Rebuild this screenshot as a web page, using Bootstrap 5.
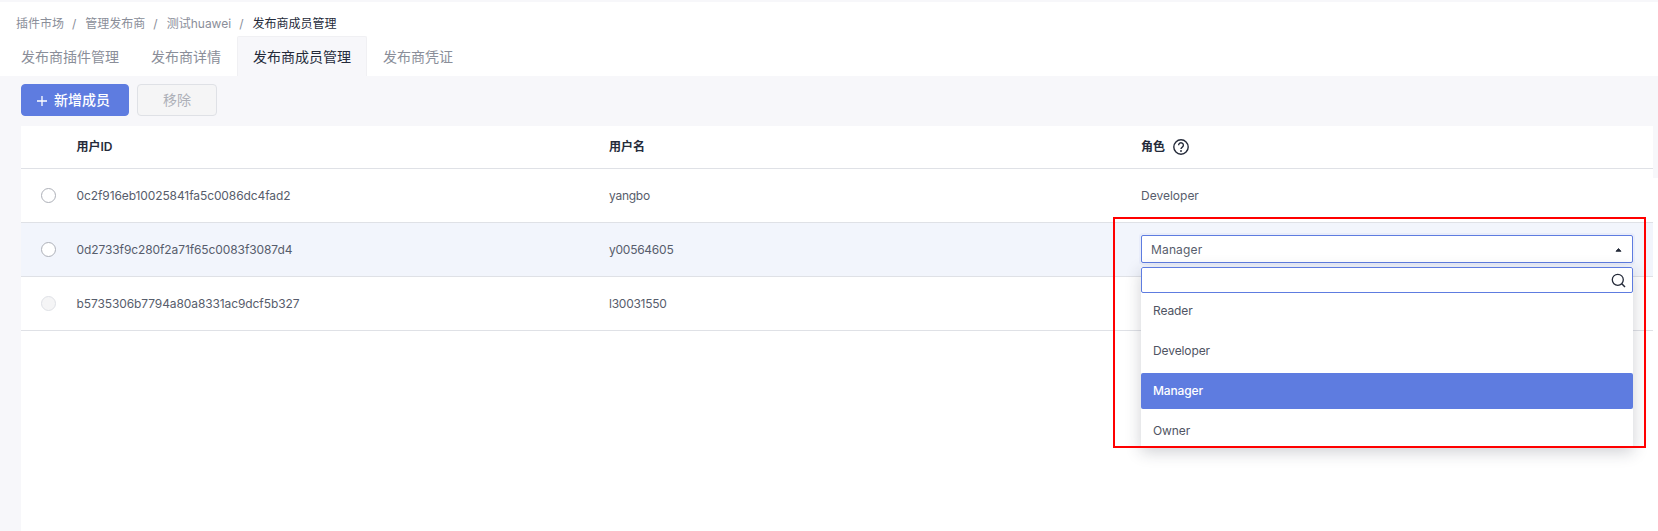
<!DOCTYPE html>
<html lang="zh-CN">
<head>
<meta charset="utf-8">
<title>发布商成员管理</title>
<link href="https://cdn.jsdelivr.net/npm/bootstrap@5.3.0/dist/css/bootstrap.min.css" rel="stylesheet">
<style>
html,body{height:100%;overflow:hidden;}
body{font-family:Inter,"Noto Sans CJK SC",sans-serif;font-size:12px;color:#575d6c;background:#fff;}
.page-shell{position:relative;height:531px;}
.top-area{height:76px;border-top:2px solid #f7f7fa;background:#fff;}
.crumbs{margin:0;padding:15px 0 0 16px;font-size:12px;line-height:14px;height:34px;}
.crumbs .breadcrumb-item,.crumbs .breadcrumb-item a{color:#8a8e99;text-decoration:none;}
.crumbs .breadcrumb-item+.breadcrumb-item{padding-left:8px;}
.crumbs .breadcrumb-item+.breadcrumb-item::before{color:#8a8e99;padding-right:9px;}
.crumbs .breadcrumb-item.active{color:#252b3a;}
.tab-row{padding-left:5px;height:40px;flex-wrap:nowrap;}
.tab-row .nav-link{color:#8a8e99;font-size:14px;line-height:40px;padding:0 15px;height:40px;border:1px solid transparent;border-bottom:0;border-radius:2px 2px 0 0;margin:0;}
.tab-row .nav-link.active{color:#252b3a;background:#f7f7fa;border-color:#f0f0f3;}
.tool-bar{height:50px;background:#f7f7fa;padding:8px 0 0 21px;}
.tool-bar .btn{height:32px;font-size:14px;line-height:20px;padding:0;border-radius:4px;}
.tool-bar .add-btn{width:108px;background:#5e7ce0;border-color:#5e7ce0;color:#fff;font-weight:500;padding-right:3px;}
.add-btn svg{margin-right:7px;vertical-align:-1px;}
.remove-btn.btn:disabled{width:80px;background:#f5f5f6;border-color:#dfe1e6;color:#adb0b8;opacity:1;}
.body-area{height:405px;}
.side-strip{width:21px;background:#f7f7fa;flex:none;}
.end-strip{width:5px;height:52px;background:#f7f7fa;flex:none;}
.table-area{width:1632px;flex:none;}
.member-table{table-layout:fixed;width:1632px;margin:0;font-size:12px;--bs-table-color:#575d6c;--bs-table-border-color:#dfe1e6;}
.member-table th,.member-table td{vertical-align:middle;border-bottom:1px solid #dfe1e6;box-shadow:none;}
.member-table thead th{height:42px;color:#252b3a;font-weight:600;}
.member-table thead tr{height:42px;}
.member-table tbody td{height:54px;color:#575d6c;}
.member-table>thead>tr>th{padding:0 12px;}
.member-table>tbody>tr>td{padding:2px 12px 0;}
.member-table>thead>tr>th.pick-col,.member-table>tbody>tr>td.pick-col{padding:0 0 0 20px;}
.member-table>thead>tr>th.role-col{padding:0 20px 0 12px;}
.member-table>tbody>tr>td.role-col{padding:2px 20px 0 12px;}
.member-table>tbody>tr>td.select-cell{padding:0 20px 0 12px;}
.member-table tbody tr.row-hl>td{background:#f2f5fc;}
.member-table .id-cell{letter-spacing:-.1px;}
.member-table .name-cell{letter-spacing:-.25px;}
.pick-radio.form-check-input{width:15px;height:15px;margin:0;border:1px solid #adb0b8;background-color:#fff;display:block;}
.pick-radio.form-check-input:disabled{opacity:1;background-color:#f5f5f6;border-color:#dfe1e6;}
.help-icon{margin-left:8px;vertical-align:-4px;}
.role-select{position:relative;}
.select-box{height:28px;border:1px solid #5e7ce0;border-radius:2px;background:#fff;padding:2px 9px 0;box-shadow:0 0 0 2px #e9edfa;color:#575d6c;letter-spacing:.15px;}
.select-panel{position:absolute;left:0;right:0;top:32px;height:181px;background:#fff;box-shadow:0 4px 16px rgba(37,43,58,.22);z-index:5;overflow:hidden;border-radius:2px;}
.search-box{height:26px;border:1px solid #5e7ce0;border-radius:2px;padding-right:6px;}
.option-list{margin:0;padding:0;}
.option-list .list-group-item{border:0;padding:0 0 0 12px;height:36px;line-height:36px;margin-top:4px;font-size:12px;color:#4f5463;border-radius:0;background:transparent;letter-spacing:-.1px;}
.option-list .list-group-item:first-child{margin-top:0;}
.option-list .list-group-item+.list-group-item.active{margin-top:4px;border-top-width:0;}
.option-list .list-group-item.active{background:#5e7ce0;color:#fff;font-weight:500;border-radius:2px;letter-spacing:-.15px;}
.mark-box{position:absolute;left:1113px;top:217px;width:533px;height:231px;border:2px solid #f00;z-index:10;pointer-events:none;}
</style>
</head>
<body>
<div class="page-shell">
  <div class="top-area">
    <nav aria-label="breadcrumb">
      <ol class="breadcrumb crumbs">
        <li class="breadcrumb-item"><a href="#">插件市场</a></li>
        <li class="breadcrumb-item"><a href="#">管理发布商</a></li>
        <li class="breadcrumb-item"><a href="#">测试huawei</a></li>
        <li class="breadcrumb-item active" aria-current="page">发布商成员管理</li>
      </ol>
    </nav>
    <ul class="nav tab-row">
      <li class="nav-item"><a class="nav-link" href="#">发布商插件管理</a></li>
      <li class="nav-item"><a class="nav-link" href="#">发布商详情</a></li>
      <li class="nav-item"><a class="nav-link active" href="#">发布商成员管理</a></li>
      <li class="nav-item"><a class="nav-link" href="#">发布商凭证</a></li>
    </ul>
  </div>
  <div class="tool-bar d-flex gap-2">
    <button type="button" class="btn add-btn"><svg width="10" height="10" viewBox="0 0 10 10"><path d="M5 0v10M0 5h10" stroke="#fff" stroke-width="1.3" fill="none"/></svg>新增成员</button>
    <button type="button" class="btn remove-btn" disabled>移除</button>
  </div>
  <div class="body-area d-flex align-items-stretch">
    <div class="side-strip"></div>
    <div class="table-area">
      <table class="table member-table">
        <colgroup><col style="width:43.5px"><col style="width:532.5px"><col style="width:532px"><col style="width:524px"></colgroup>
        <thead>
          <tr><th class="pick-col"></th><th>用户ID</th><th>用户名</th><th class="role-col">角色<svg class="help-icon" width="16" height="16" viewBox="0 0 16 16"><circle cx="8" cy="8" r="7.2" fill="none" stroke="#252b3a" stroke-width="1.4"/><path d="M5.6 6.2a2.4 2.4 0 1 1 3.7 2c-.9.6-1.3 1-1.3 1.9" fill="none" stroke="#252b3a" stroke-width="1.4"/><circle cx="8" cy="12" r=".95" fill="#252b3a"/></svg></th></tr>
        </thead>
        <tbody>
          <tr><td class="pick-col"><input class="form-check-input pick-radio" type="radio" name="member" aria-label="选择"></td><td class="id-cell">0c2f916eb10025841fa5c0086dc4fad2</td><td class="name-cell">yangbo</td><td class="role-col">Developer</td></tr>
          <tr class="row-hl"><td class="pick-col"><input class="form-check-input pick-radio" type="radio" name="member" aria-label="选择"></td><td class="id-cell">0d2733f9c280f2a71f65c0083f3087d4</td><td class="name-cell">y00564605</td>
            <td class="select-cell">
              <div class="role-select">
                <div class="select-box d-flex align-items-center justify-content-between">
                  <span>Manager</span>
                  <svg width="9" height="6" viewBox="0 0 9 6"><path d="M4.5 1.5L7 4.3H2Z" fill="#252b3a" stroke="#252b3a" stroke-width=".9" stroke-linejoin="round"/></svg>
                </div>
                <div class="select-panel">
                  <div class="search-box d-flex align-items-center justify-content-end">
                    <svg width="15" height="15" viewBox="0 0 15 15"><circle cx="6.8" cy="6.8" r="5.5" fill="none" stroke="#252b3a" stroke-width="1.3"/><path d="M10.8 10.8l3.2 3.2" stroke="#252b3a" stroke-width="1.5" fill="none"/></svg>
                  </div>
                  <ul class="list-group option-list">
                    <li class="list-group-item">Reader</li>
                    <li class="list-group-item">Developer</li>
                    <li class="list-group-item active">Manager</li>
                    <li class="list-group-item">Owner</li>
                  </ul>
                </div>
              </div>
            </td></tr>
          <tr><td class="pick-col"><input class="form-check-input pick-radio" type="radio" name="member" disabled aria-label="选择"></td><td class="id-cell">b5735306b7794a80a8331ac9dcf5b327</td><td class="name-cell">l30031550</td><td class="role-col"></td></tr>
        </tbody>
      </table>
    </div>
    <div class="end-strip"></div>
  </div>
  <div class="mark-box"></div>
</div>
<script src="https://cdn.jsdelivr.net/npm/bootstrap@5.3.0/dist/js/bootstrap.bundle.min.js"></script>
</body>
</html>
